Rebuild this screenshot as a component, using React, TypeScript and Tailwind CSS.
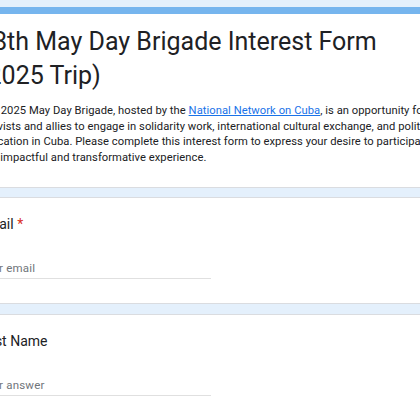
export default function App() {
  return (
    <div className="w-[420px] h-[420px] overflow-hidden bg-[#e4f0fc] font-['Roboto',sans-serif] text-[#202124]">
      <div className="pt-[7px] ml-[-46px] w-[560px] flex flex-col">
        {/* header card */}
        <div className="bg-white border-t-[7px] border-t-[#76b5ee] border-x border-b border-[#dadce0] px-6 pt-[11px] pb-[22px]">
          <h1 className="text-[25px] leading-[34px] whitespace-nowrap">
            28th May Day Brigade Interest Form
            <br />
            (2025 Trip)
          </h1>
          <p className="mt-[10px] text-[11.2px] leading-[15.5px] tracking-[0.05px] whitespace-nowrap">
            The 2025 May Day Brigade, hosted by the{" "}
            <a href="#" className="text-[#1a73e8] underline">
              National Network on Cuba
            </a>
            , is an opportunity for
            <br />
            activists and allies to engage in solidarity work, international cultural exchange, and political
            <br />
            education in Cuba. Please complete this interest form to express your desire to participate in
            <br />
            this impactful and transformative experience.
          </p>
        </div>

        <Question label="Email" required placeholder="Your email" className="mt-[9px]" />
        <Question label="First Name" placeholder="Your answer" className="mt-[10px]" />
      </div>
    </div>
  );
}

function Question({
  label,
  placeholder,
  required,
  className,
}: {
  label: string;
  placeholder: string;
  required?: boolean;
  className?: string;
}) {
  return (
    <div className={`bg-white border border-[#dadce0] px-6 pt-4 pb-6 ${className ?? ""}`}>
      <div className="text-[14px] leading-5">
        {label}
        {required && <span className="text-[#d93025]"> *</span>}
      </div>
      <div className="mt-[26px] w-[232px] border-b border-[#e0e0e0] pb-[2px] text-[11.5px] leading-4 tracking-[0.2px] text-[#70757a]">
        {placeholder}
      </div>
    </div>
  );
}
